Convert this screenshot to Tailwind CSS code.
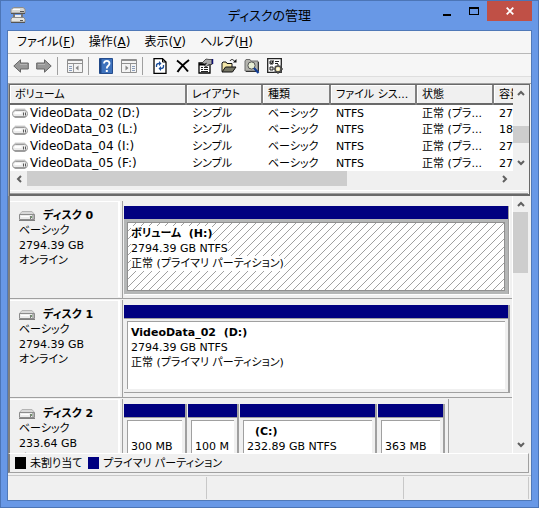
<!DOCTYPE html>
<html lang="ja">
<head>
<meta charset="utf-8">
<title>ディスクの管理</title>
<script src="https://cdn.jsdelivr.net/npm/@tailwindcss/browser@4"></script>
</head>
<body class="h-screen overflow-hidden text-black text-[11px] leading-[15px] font-['DejaVu_Sans','Noto_Sans_CJK_JP',sans-serif] [font-feature-settings:'palt']">
<svg class="hidden" aria-hidden="true">
  <symbol id="drive" viewBox="0 0 16 10">
    <path d="M3 .5h10l2.500 4H.5z" fill="#d4d4d4"/>
    <rect x=".5" y="2.500" width="15" height="6.500" rx="3" fill="#ececec" stroke="#9a9a9a"/>
    <path d="M3 1.500h10" stroke="#c4c4c4"/>
    <path d="M2.500 5h7" stroke="#fff" stroke-width="2"/>
    <path d="M2.500 9h11" stroke="#707070"/>
    <path d="M11.500 4.500v3M13.500 4.500v3" stroke="#5a5a5a"/>
  </symbol>
  <symbol id="disk" viewBox="0 0 16 10">
    <path d="M3 .5h10l2.500 3H.5z" fill="#d8d8d8" stroke="#b4b4b4"/>
    <path d="M.5 3.500h15v5H.5z" fill="#ececec" stroke="#8c8c8c"/>
    <path d="M2 5.500h8" stroke="#fff"/>
    <path d="M0 9.500h16" stroke="#808080"/>
    <path d="M12 5h1v2h-1z" fill="#6f9a68"/>
    <path d="M11.500 5v3M14 4v4" stroke="#7a7a7a"/>
  </symbol>
  <symbol id="up" viewBox="0 0 8 6"><path d="M1 5l3-3 3 3" fill="none" stroke="#606060" stroke-width="2"/></symbol>
  <symbol id="down" viewBox="0 0 8 6"><path d="M1 1l3 3 3-3" fill="none" stroke="#606060" stroke-width="2"/></symbol>
  <symbol id="left" viewBox="0 0 6 8"><path d="M5 1L2 4l3 3" fill="none" stroke="#606060" stroke-width="2"/></symbol>
  <symbol id="right" viewBox="0 0 6 8"><path d="M1 1l3 3-3 3" fill="none" stroke="#606060" stroke-width="2"/></symbol>
  <symbol id="arrow" viewBox="0 0 16 14">
    <path d="M.8 7L7.500.8v3.200h7.800v6H7.500v3.200z" fill="#989898" stroke="#666"/>
    <path d="M7 5.500h7" stroke="#b4b4b4"/>
  </symbol>
</svg>

<div class="flex h-full flex-col border border-[#4c75b6] bg-[#6898e6] px-[6px] pb-[6px]">
  <header class="grid h-[29px] shrink-0 grid-cols-[1fr_auto_1fr]">
    <svg class="mt-1.5 ml-[3px] h-4 w-4" viewBox="0 0 16 16" aria-hidden="true">
      <path d="M2 1.500L4 .5h9l2 1.500v4H1V2.500z" fill="#d7d7d3" stroke="#8c8c8c"/>
      <path d="M3 2.500h7" stroke="#fff"/>
      <path d="M1 6.500h14" stroke="#555"/><path d="M10 4.500h4" stroke="#555"/>
      <path d="M4 7v3M12 7v3" stroke="#777" stroke-width="2"/>
      <path d="M5 8h6v2H5z" fill="#eee"/>
      <path d="M2 10.500h12l1 2v2.500H1v-2.500z" fill="#e6e6e2" stroke="#8c8c8c"/>
      <path d="M1 15.500h14" stroke="#555"/><path d="M10 13.500h3" stroke="#555"/>
    </svg>
    <h1 class="pt-1.5 text-[13px] leading-[18px]">ディスクの管理</h1>
    <div class="flex justify-end">
      <button aria-label="最小化" class="flex h-5 w-[27px] items-center justify-center"><svg class="h-4 w-4" viewBox="0 0 16 16"><path d="M4 11h8v2H4z"/></svg></button>
      <button aria-label="最大化" class="flex h-5 w-[27px] items-center justify-center"><svg class="h-4 w-4" viewBox="0 0 16 16"><path fill-rule="evenodd" d="M3 4h10v8H3zM4 6v5h8V6z"/></svg></button>
      <button aria-label="閉じる" class="flex h-5 w-[45px] items-center justify-center bg-[#c05046]"><svg class="h-2 w-2" viewBox="0 0 8 8"><path d="M.7.7l6.600 6.600M7.300.7L.7 7.300" stroke="#fff" stroke-width="1.800"/></svg></button>
    </div>
  </header>

  <main class="flex min-h-0 flex-1 flex-col border border-[#5079b8] bg-[#f0f0f0]">
    <nav class="flex h-[23px] shrink-0 items-center gap-3.5 border-b border-[#b8b8b8] bg-[#f6f6f6] pl-[9px] text-[12px]" aria-label="メニュー">
      <button>ファイル(<u>F</u>)</button>
      <button>操作(<u>A</u>)</button>
      <button>表示(<u>V</u>)</button>
      <button>ヘルプ(<u>H</u>)</button>
    </nav>

    <div class="flex h-[23px] shrink-0 items-center border-b border-[#dedede] bg-[#f6f6f6] pt-0.5 pl-px" role="toolbar" aria-label="ツール">
      <button aria-label="戻る" class="flex w-[23px] justify-center"><svg class="h-3.5 w-4"><use href="#arrow"/></svg></button>
      <button aria-label="進む" class="flex w-[23px] justify-center"><svg class="h-3.5 w-4 -scale-x-100"><use href="#arrow"/></svg></button>
      <span class="mr-[5px] ml-[2px] h-[18px] w-px bg-[#a0a0a0]"></span>
      <button aria-label="コンソール ツリー" class="flex w-[23px] justify-center"><svg class="h-3.5 w-4" viewBox="0 0 16 14">
        <path d="M.5.5h15v13H.5z" fill="#f4f4f4" stroke="#8f8f8f"/><path d="M1 1.500h14M1 4.500h14" stroke="#909090"/><path d="M11 2.500h1M13 2.500h1" stroke="#eee"/><path d="M6.500 5v8" stroke="#9a9a9a"/><path d="M2 7.500h3M2 9.500h3M2 11.500h3" stroke="#8a9dba"/><path d="M11.500 6.500v5L8.500 9z" fill="#888"/></svg></button>
      <span class="mr-[5px] ml-[2px] h-[18px] w-px bg-[#a0a0a0]"></span>
      <button aria-label="ヘルプ" class="flex w-[23px] justify-center"><svg class="h-4 w-3.5" viewBox="0 0 14 16">
        <path d="M.5.5h13v15H.5z" fill="#3e72bd" stroke="#254c8c"/><path d="M1.500 1v14" stroke="#1f4684" stroke-width="2"/><path d="M5 5.500C5 2 10.500 2 10.500 5.500 10.500 8 7.800 7.500 7.800 10.500" fill="none" stroke="#fff" stroke-width="1.800"/><path d="M6.800 12h2v2h-2z" fill="#fff"/></svg></button>
      <button aria-label="操作ウィンドウ" class="flex w-[23px] justify-center"><svg class="h-3.5 w-4" viewBox="0 0 16 14">
        <path d="M.5.5h15v13H.5z" fill="#f4f4f4" stroke="#8f8f8f"/><path d="M1 1.500h14M1 4.500h14" stroke="#909090"/><path d="M11 2.500h1M13 2.500h1" stroke="#eee"/><path d="M9.500 5v8" stroke="#9a9a9a"/><path d="M11 7.500h3M11 9.500h3M11 11.500h3" stroke="#8a9dba"/><path d="M4.500 6.500v5l3-2.500z" fill="#888"/></svg></button>
      <span class="mr-[5px] ml-[2px] h-[18px] w-px bg-[#a0a0a0]"></span>
      <button aria-label="最新の情報に更新" class="flex w-[23px] justify-center"><svg class="h-4 w-3.5" viewBox="0 0 14 16">
        <path d="M1 .7h8.500L13 4v11.300H1z" fill="#fff" stroke="#000" stroke-width="1.300"/><path d="M9.500.5V4H13" fill="none" stroke="#000"/><path d="M3.500 9V7.500c0-1.500 1-2 2.500-2" fill="none" stroke="#1c4f9c" stroke-width="1.300"/><path d="M6 3v5l2.500-2.500zM8 8v5l-2.500-2.500z" fill="#1c4f9c"/><path d="M10.500 7v1.500c0 1.500-1 2-2.500 2" fill="none" stroke="#1c4f9c" stroke-width="1.300"/></svg></button>
      <button aria-label="削除" class="flex w-[23px] justify-center"><svg class="h-3.5 w-3.5" viewBox="0 0 14 14"><path d="M1 1.500c3 2 8 7 11 11M13 1C9 4 4 9 1.500 13" fill="none" stroke="#000" stroke-width="2"/></svg></button>
      <button aria-label="プロパティ" class="flex w-[23px] justify-center"><svg class="h-4 w-4" viewBox="0 0 16 16">
        <path d="M1 5h11v10H1z" fill="#fff" stroke="#000" stroke-width="1.300"/><path d="M1 6.500h10" stroke="#000" stroke-width="2"/><path d="M3 9.500h2M6 9.500h4M3 11.500h2M6 11.500h4M3 13.500h7" stroke="#222"/><path d="M4 5l4-4 3 .5h3v5h-3L8 9 6.500 8l2-3-2 1z" fill="#a9a9a9" stroke="#333" stroke-width=".8"/><path d="M14.500 1v5" stroke="#101070" stroke-width="1.500"/></svg></button>
      <button aria-label="開く" class="flex w-[23px] justify-center"><svg class="h-4 w-4" viewBox="0 0 16 16">
        <path d="M1 13.500V5l1-1h3l1 1.500h5V9" fill="#f5e7a8" stroke="#111"/><path d="M1 14l3.500-5H15l-3.500 5z" fill="#777766" stroke="#111"/><path d="M9 3c1-2 3.500-2 4.500.5" fill="none" stroke="#111"/><path d="M15.500 1v3.500H12z" fill="#111"/></svg></button>
      <button aria-label="検索" class="flex w-[23px] justify-center"><svg class="h-4 w-4" viewBox="0 0 16 16">
        <path d="M1 13V3l1-1.500h4L7 3h7v10z" fill="#b4b4ae" stroke="#6c6c6c"/><path d="M14.500 4v9.500H2" fill="none" stroke="#333"/><circle cx="7.500" cy="7.500" r="3.600" fill="#e8eed4" stroke="#555"/><path d="M10 10l4.500 5" stroke="#123c94" stroke-width="2.200"/></svg></button>
      <button aria-label="設定" class="flex w-[23px] justify-center"><svg class="h-4 w-4" viewBox="0 0 16 16">
        <path d="M.7.7h13.600v13.600H.7z" fill="#fff" stroke="#222" stroke-width="1.300"/><path d="M3 3h3v3H3zM3 9h3v3H3z" fill="#ddd" stroke="#222"/><path d="M8 3.500h4M8 5.500h3M8 9.500h2" stroke="#222"/><path d="M3.500 4.500l1 1 2-3" fill="none" stroke="#000"/><circle cx="11" cy="11" r="3" fill="#f7ecb5" stroke="#444" stroke-width="1.400"/><path d="M11 6v2M11 14v2M6.500 11h1.500M14 11h2M8 8l1 1M13 13l1.500 1.500M14.500 7.500L13 9M7.500 14.500L9 13" stroke="#555" stroke-width="1.400"/><circle cx="11" cy="11" r="1" fill="#fff"/></svg></button>
    </div>

    <!-- Volume list -->
    <section class="mt-1.5 shrink-0 border-t border-l border-[#a0a0a0]" aria-label="ボリューム一覧">
      <div class="mr-px border-t border-r border-b-2 border-l border-[#696969]">
        <div class="flex h-[86px]">
          <div class="min-w-0 flex-1 overflow-hidden bg-white">
            <table class="w-[560px] table-fixed border-collapse text-left whitespace-nowrap">
              <colgroup><col class="w-[176px]"><col class="w-[76px]"><col class="w-[68px]"><col class="w-[86px]"><col class="w-[77px]"><col></colgroup>
              <thead>
                <tr class="h-[19px] border-b-2 border-[#696969] bg-[#f0f0f0] *:border-r-2 *:border-r-[#808080] *:p-0 *:pl-[5px] *:font-normal *:shadow-[inset_1px_1px_0_#fff]">
                  <th>ボリューム</th><th>レイアウト</th><th>種類</th><th>ファイル シス...</th><th>状態</th><th>容量</th>
                </tr>
              </thead>
              <tbody class="*:h-[17px]">
                <tr class="*:p-0 *:pl-[6px] *:first:pl-[2px] *:first:text-[12px]"><td><span class="flex items-center gap-0.5"><svg class="h-2.5 w-4"><use href="#drive"/></svg>VideoData_02 (D:)</span></td><td>シンプル</td><td>ベーシック</td><td>NTFS</td><td>正常 (プラ...</td><td>2794.39 GB</td></tr>
                <tr class="*:p-0 *:pl-[6px] *:first:pl-[2px] *:first:text-[12px]"><td><span class="flex items-center gap-0.5"><svg class="h-2.5 w-4"><use href="#drive"/></svg>VideoData_03 (L:)</span></td><td>シンプル</td><td>ベーシック</td><td>NTFS</td><td>正常 (プラ...</td><td>1863.01 GB</td></tr>
                <tr class="*:p-0 *:pl-[6px] *:first:pl-[2px] *:first:text-[12px]"><td><span class="flex items-center gap-0.5"><svg class="h-2.5 w-4"><use href="#drive"/></svg>VideoData_04 (I:)</span></td><td>シンプル</td><td>ベーシック</td><td>NTFS</td><td>正常 (プラ...</td><td>2794.39 GB</td></tr>
                <tr class="*:p-0 *:pl-[6px] *:first:pl-[2px] *:first:text-[12px]"><td><span class="flex items-center gap-0.5"><svg class="h-2.5 w-4"><use href="#drive"/></svg>VideoData_05 (F:)</span></td><td>シンプル</td><td>ベーシック</td><td>NTFS</td><td>正常 (プラ...</td><td>2794.39 GB</td></tr>
              </tbody>
            </table>
          </div>
          <div class="flex w-4 shrink-0 flex-col">
            <button aria-label="上へ" class="flex h-4 items-center justify-center"><svg class="h-1.5 w-2"><use href="#up"/></svg></button>
            <div class="flex-1 pt-[25px]"><div class="h-[17px] bg-[#cdcdcd]"></div></div>
            <button aria-label="下へ" class="flex h-4 items-center justify-center"><svg class="h-1.5 w-2"><use href="#down"/></svg></button>
          </div>
        </div>
        <div class="mr-4 flex h-4">
          <button aria-label="左へ" class="flex w-[17px] items-center justify-center"><svg class="h-2 w-1.5"><use href="#left"/></svg></button>
          <div class="flex-1"><div class="h-[15px] w-[68%] bg-[#cdcdcd]"></div></div>
          <button aria-label="右へ" class="flex w-4 items-center justify-center"><svg class="h-2 w-1.5"><use href="#right"/></svg></button>
        </div>
        <div class="mt-[3px] mr-px h-1 border-y border-t-white border-b-[#a0a0a0]"></div>
      </div>
    </section>

    <!-- Disk map -->
    <section class="mr-0.5 flex min-h-0 flex-1 border-l-2 border-[#808080]" aria-label="ディスク">
      <div class="min-w-0 flex-1 overflow-hidden border-r border-white pt-1">
        <article class="flex h-[99px] border-b border-[#a0a0a0]">
          <div class="mt-px mb-px w-[110px] shrink-0 border-t border-r-2 border-white pt-1.5 pl-[9px]">
            <h2 class="flex items-center gap-2 font-bold"><svg class="h-2.5 w-4"><use href="#disk"/></svg>ディスク 0</h2>
            <p>ベーシック</p><p>2794.39 GB</p><p>オンライン</p>
          </div>
          <div class="mt-px ml-[2px] min-w-0 flex-1 border-l border-[#a0a0a0] pt-[5px] pr-[3px] pb-[4px] pl-px">
            <div class="flex h-full flex-col border-r border-[#a0a0a0] bg-[#b4b6b6] shadow-[1px_1px_0_#fff]">
              <div class="h-[13px] bg-[#000080]"></div>
              <div class="mt-[3px] mr-[3px] mb-[3px] ml-[3px] flex-1 border border-[#909090] bg-white bg-[linear-gradient(135deg,transparent_46%,#a0a0a0_46%,#a0a0a0_54%,transparent_54%)] bg-size-[8px_8px] pt-[3px] pl-[3px]">
                <h3 class="w-fit bg-white font-bold whitespace-pre">ボリューム  (H:)</h3><p class="w-fit bg-white">2794.39 GB NTFS</p><p class="w-fit bg-white">正常 (プライマリ パーティション)</p>
              </div>
            </div>
          </div>
        </article>
        <article class="flex h-[99px] border-b border-[#a0a0a0]">
          <div class="mt-px mb-px w-[110px] shrink-0 border-t border-r-2 border-white pt-1.5 pl-[9px]">
            <h2 class="flex items-center gap-2 font-bold"><svg class="h-2.5 w-4"><use href="#disk"/></svg>ディスク 1</h2>
            <p>ベーシック</p><p>2794.39 GB</p><p>オンライン</p>
          </div>
          <div class="mt-px ml-[2px] min-w-0 flex-1 border-l border-[#a0a0a0] pt-[5px] pr-[2px] pb-[4px] pl-px">
            <div class="flex h-full flex-col border-r-2 border-b border-[#a0a0a0]">
              <div class="h-[14px] border-b border-[#a0a0a0] bg-[#000080]"></div>
              <div class="mt-0.5 mr-[3px] mb-[3px] ml-[3px] flex-1 border-t border-l border-[#a0a0a0] bg-white pt-[3px] pl-[3px]">
                <h3 class="font-bold whitespace-pre">VideoData_02  (D:)</h3><p>2794.39 GB NTFS</p><p>正常 (プライマリ パーティション)</p>
              </div>
            </div>
          </div>
        </article>
        <article class="flex h-[99px]">
          <div class="mt-px mb-px w-[110px] shrink-0 border-t border-r-2 border-white pt-1.5 pl-[9px]">
            <h2 class="flex items-center gap-2 font-bold"><svg class="h-2.5 w-4"><use href="#disk"/></svg>ディスク 2</h2>
            <p>ベーシック</p><p>233.64 GB</p><p>オンライン</p>
          </div>
          <div class="mt-px ml-[2px] grid w-[327px] grid-cols-[64px_51px_138px_68px] border-r border-l border-[#a0a0a0] pt-[5px] pl-px">
            <div class="mr-px flex flex-col border-r-2 border-[#a0a0a0]">
              <div class="h-[14px] border-b border-[#a0a0a0] bg-[#000080]"></div>
              <div class="mx-[3px] mt-0.5 flex-1 overflow-hidden border-t border-l border-[#a0a0a0] bg-white pt-[18px] pl-[3px] whitespace-nowrap">300 MB</div>
            </div>
            <div class="flex flex-col border-r-2 border-[#a0a0a0]">
              <div class="h-[14px] border-b border-[#a0a0a0] bg-[#000080]"></div>
              <div class="mx-[3px] mt-0.5 flex-1 overflow-hidden border-t border-l border-[#a0a0a0] bg-white pt-[18px] pl-[3px] whitespace-nowrap">100 M</div>
            </div>
            <div class="ml-px flex flex-col border-r-2 border-[#a0a0a0]">
              <div class="h-[14px] border-b border-[#a0a0a0] bg-[#000080]"></div>
              <div class="mx-[3px] mt-0.5 flex-1 border-t border-l border-[#a0a0a0] bg-white pt-[3px] pl-[3px]"><h3 class="pl-2 font-bold">(C:)</h3><p>232.89 GB NTFS</p></div>
            </div>
            <div class="ml-px flex flex-col border-r-2 border-[#a0a0a0]">
              <div class="h-[14px] border-b border-[#a0a0a0] bg-[#000080]"></div>
              <div class="mx-[3px] mt-0.5 flex-1 border-t border-l border-[#a0a0a0] bg-white pt-[18px] pl-[3px]">363 MB</div>
            </div>
          </div>
        </article>
      </div>
      <div class="flex w-4 shrink-0 flex-col">
        <button aria-label="上へ" class="flex h-4 items-center justify-center"><svg class="h-1.5 w-2"><use href="#up"/></svg></button>
        <div class="flex-1"><div class="h-[61px] w-[15px] bg-[#cdcdcd]"></div></div>
        <button aria-label="下へ" class="flex h-4 items-center justify-center"><svg class="h-1.5 w-2"><use href="#down"/></svg></button>
      </div>
    </section>

    <div class="mr-0.5 flex h-5 shrink-0 items-center border-t border-r border-b border-l-2 border-[#a0a0a0] border-t-white border-l-[#808080] pl-[5px]">
      <span class="mr-1 h-3 w-[11px] bg-black"></span>未割り当て
      <span class="mr-1 ml-1.5 h-3 w-[11px] bg-[#000080]"></span>プライマリ パーティション
    </div>
    <footer class="mt-0.5 flex h-[25px] shrink-0 border-t border-[#c8c8c8] pt-px pr-[2px] pb-px">
      <div class="w-[199px] border-r border-[#c8c8c8]"></div>
      <div class="w-[197px] border-r border-[#c8c8c8]"></div>
      <div class="flex-1 border-r border-[#c8c8c8]"></div>
    </footer>
  </main>
</div>
</body>
</html>
